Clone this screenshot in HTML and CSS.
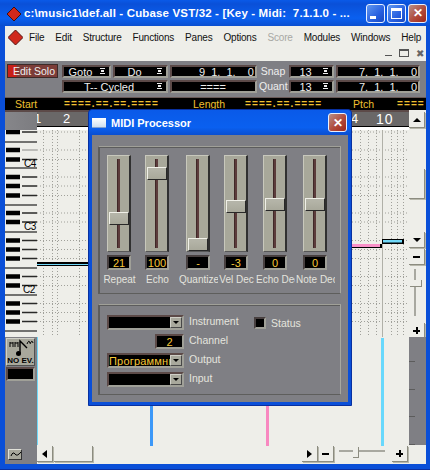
FILE: index.html
```html
<!DOCTYPE html>
<html lang="en">
<head>
	<meta charset="UTF-8">
	<title>Cubase VST/32 - MIDI Processor</title>
	<link rel="stylesheet" href="styles.css">
</head>
<body>
<div class="window">
	<div class="titlebar">
		<svg class="app-icon" width="14" height="14" viewBox="0 0 14 14"><path d="M7 0L14 7L7 14L0 7Z" fill="#d0281c" stroke="#401010"/></svg>
		<span class="title-text">c:\music1\def.all - Cubase VST/32 - [Key - Midi:&nbsp; 7.1.1.0 - ...</span>
		<div class="win-btns">
			<span class="win-btn"><i class="ic-min"></i></span>
			<span class="win-btn"><i class="ic-max"></i></span>
			<span class="win-btn close">&#10005;</span>
		</div>
	</div>

	<div class="content">
		<div class="menubar">
			<svg class="menu-icon" width="15" height="15" viewBox="0 0 15 15"><path d="M7.5 0L15 7.5L7.5 15L0 7.5Z" fill="#d0281c" stroke="#501010"/></svg>
			<span>File</span><span>Edit</span><span>Structure</span><span>Functions</span><span>Panes</span><span>Options</span><span class="off">Score</span><span>Modules</span><span>Windows</span><span>Help</span>
		</div>
		<div class="mdi-row">
			<i class="mdi-min"></i><i class="mdi-max"></i><span class="mdi-close">&#10006;</span>
		</div>

		<div class="transport">
			<div class="edit-solo"><span>Edit Solo</span></div>
			<div class="lcd drop">Goto<i class="spin"></i></div>
			<div class="lcd drop">Do<i class="spin"></i></div>
			<div class="lcd time">9 &nbsp;1. &nbsp;1. &nbsp; &nbsp;0</div>
			<div class="tlabel">Snap</div>
			<div class="lcd drop">13<i class="spin"></i></div>
			<div class="lcd time">7. &nbsp;1. &nbsp;1. &nbsp; &nbsp;0</div>

			<div class="lcd drop wide">T-- Cycled<i class="spin"></i></div>
			<div class="lcd time center">====</div>
			<div class="tlabel">Quant</div>
			<div class="lcd drop">13<i class="spin"></i></div>
			<div class="lcd time">7. &nbsp;1. &nbsp;1. &nbsp; &nbsp;0</div>
		</div>

		<div class="infobar">
			<span class="i-start">Start</span><span class="i-val v1">====.==.==.====</span>
			<span class="i-len">Length</span><span class="i-val v2">====.==.====</span>
			<span class="i-pitch">Ptch</span><span class="i-val v3">====</span>
		</div>

		<div class="editor">
			<div class="corner"></div>
			<div class="ruler">
				<span class="r1">1</span><span class="r2">2</span><span class="r4">4</span><span class="r10">10</span>
			</div>
			<div class="vbar">
				<div class="btn up"><i class="tri-up"></i></div>
				<div class="vthumb"></div>
				<div class="btn down"><i class="tri-down"></i></div>
				<div class="btn"><i class="minus"></i></div>
				<div class="vslide"><div class="vslide-thumb"></div></div>
				<div class="btn plus-btn"><i class="plus"></i></div>
			</div>

			<svg class="keys" width="32" height="207" viewBox="0 0 32 207">
				<rect width="32" height="207" fill="#eeeee9"/>
				<path d="M0 12H32M0 38H32M0 75H32M0 102H32M0 138H32M0 165H32M0 201H32" stroke="#4a4a48" stroke-width="1.5"/>
				<path d="M1 2H15M1 20H15M1 29.5H15M1 47H15M1 56H15M1 65.5H15M1 83H15M1 92H15M1 110.5H15M1 119.5H15M1 128.5H15M1 146.5H15M1 155.5H15M1 173.5H15M1 182.5H15M1 191.5H15" stroke="#000" stroke-width="4.4"/>
				<path d="M17 2H32M17 29.5H32M17 47H32M17 56H32M17 65.5H32M17 83H32M17 92H32M17 110.5H32M17 119.5H32M17 128.5H32M17 146.5H32M17 155.5H32M17 173.5H32M17 182.5H32M17 191.5H32" stroke="#2a2a28" stroke-width="1.5"/>
				<path d="M17 20H32" stroke="#8a8a88"/>
				<text x="19" y="37" class="key-label">C4</text>
				<text x="19" y="100" class="key-label">C3</text>
				<text x="18" y="163" class="key-label">C2</text>
			</svg>

			<svg class="grid" width="372" height="207" viewBox="0 0 372 207">
				<rect width="372" height="207" fill="#eeeee9"/>
				<path d="M0 2H370M0 20H370M0 29.5H370M0 47H370M0 56H370M0 65.5H370M0 83H370M0 92H370M0 110.5H370M0 119.5H370M0 128.5H370M0 146.5H370M0 155.5H370M0 173.5H370M0 182.5H370M0 191.5H370" stroke="#a0a09a" stroke-dasharray="1 2" fill="none"/>
				<path d="M6.5 0V207M15.5 0V207M20.5 0V207M42.5 0V207M323.5 0V207M331.5 0V207M339.5 0V207M354.5 0V207M360.5 0V207M366.5 0V207" stroke="#a0a09a" stroke-dasharray="1 2" fill="none"/>
				<path d="M345.5 0V207" stroke="#b0b0a8"/>
				<rect x="0" y="132" width="60" height="4" fill="#000"/>
				<rect x="0" y="134" width="60" height="1" fill="#70d8f8"/>
				<rect x="310" y="114" width="35" height="4" fill="#000"/>
				<rect x="310" y="114" width="33" height="3" fill="#f890c8"/>
				<rect x="345" y="109" width="22" height="5" fill="#000"/>
				<rect x="346" y="110" width="19" height="2.5" fill="#70d8f8"/>
			</svg>

			<div class="tools">
				<div class="noev">
					<svg width="26" height="18" viewBox="0 0 26 18">
						<path d="M2 3V8M5 3V8M2 4H5M7 3V8M10 3V8M7 4H10M19 5Q21 0 22 4M22 5Q24 0 25 4" stroke="#000" fill="none"/>
						<path d="M12 14V2L19 9" stroke="#000" stroke-width="1.4" fill="none"/>
						<ellipse cx="10.5" cy="14.5" rx="2.5" ry="2.5" fill="#000"/>
					</svg>
					<span>NO EV.</span>
				</div>
				<div class="lcd tool-lcd"></div>
				<div class="wave">
					<svg width="12" height="9" viewBox="0 0 12 9"><path d="M1 6Q3 1 5 4T11 2" stroke="#000" fill="none"/></svg>
				</div>
			</div>

			<div class="lane">
				<i class="ctl blue"></i><i class="ctl pink"></i><i class="ctl cyan"></i>
			</div>
			<div class="velo"></div>

			<div class="hbar">
				<div class="btn"><i class="tri-left"></i></div>
				<div class="hthumb"></div>
				<div class="spacer"></div>
				<div class="btn"><i class="tri-right"></i></div>
				<div class="btn"><i class="minus"></i></div>
				<div class="hslide"><div class="hslide-thumb"></div></div>
				<div class="btn"><i class="plus"></i></div>
			</div>
		</div>
	</div>

	<!-- dialog over the editor -->
	<div class="dialog">
		<div class="dlg-title">
			<i class="dlg-icon"></i>
			<span>MIDI Processor</span>
			<span class="win-btn close dlg-close">&#10005;</span>
		</div>
		<div class="dlg-body">
			<div class="panel faders">
				<div class="channel">
					<div class="fader"><div class="slot"></div><div class="thumb" style="top:56px"></div></div>
					<div class="lcd val">21</div>
					<div class="flabel">Repeat</div>
				</div>
				<div class="channel">
					<div class="fader"><div class="slot"></div><div class="thumb" style="top:11px"></div></div>
					<div class="lcd val">100</div>
					<div class="flabel">Echo</div>
				</div>
				<div class="channel">
					<div class="fader"><div class="slot"></div><div class="thumb" style="top:82px"></div></div>
					<div class="lcd val">-</div>
					<div class="flabel">Quantize</div>
				</div>
				<div class="channel">
					<div class="fader"><div class="slot"></div><div class="thumb" style="top:44px"></div></div>
					<div class="lcd val">-3</div>
					<div class="flabel">Vel Dec</div>
				</div>
				<div class="channel">
					<div class="fader"><div class="slot"></div><div class="thumb" style="top:42px"></div></div>
					<div class="lcd val">0</div>
					<div class="flabel">Echo Dec</div>
				</div>
				<div class="channel">
					<div class="fader"><div class="slot"></div><div class="thumb" style="top:42px"></div></div>
					<div class="lcd val">0</div>
					<div class="flabel">Note Dec</div>
				</div>
			</div>
			<div class="panel routing">
				<div class="lcd select"><i class="sel-btn"><b class="tri-down small"></b></i></div>
				<div class="rlabel">Instrument</div>
				<div class="status"><i class="check"></i><span>Status</span></div>

				<div class="lcd channel-box">2</div>
				<div class="rlabel">Channel</div>
				<div></div>

				<div class="lcd select">Программный<i class="sel-btn"><b class="tri-down small"></b></i></div>
				<div class="rlabel">Output</div>
				<div></div>

				<div class="lcd select"><i class="sel-btn"><b class="tri-down small"></b></i></div>
				<div class="rlabel">Input</div>
				<div></div>
			</div>
		</div>
	</div>
</div>
</body>
</html>
```

FILE: styles.css
```css
*{
	box-sizing: border-box;
}
body{
	margin: 0;
	font-family: "Liberation Sans", "Noto Sans", sans-serif;
	font-size: 11px;
}
i{
	display: block;
}

/* main window */
.window{
	position: relative;
	width: 430px;
	height: 470px;
	overflow: hidden;
	background: #0a4fd8;
	border-bottom: 1px solid #0a2fa0;
}
.titlebar{
	height: 26px;
	display: flex;
	align-items: center;
	padding: 0 3px 0 7px;
	background: linear-gradient(#0a5ae8, #0a50d8 15%, #0a60f0 70%, #0a4ed0);
}
.app-icon{
	flex: none;
	margin-top: 1px;
}
.title-text{
	flex: none;
	width: 340px;
	margin-left: 3px;
	overflow: hidden;
	color: #fff;
	font-size: 11.5px;
	font-weight: bold;
	letter-spacing: .15px;
	white-space: nowrap;
}
.win-btns{
	display: flex;
	gap: 2px;
	margin-left: auto;
}
.win-btn{
	flex: none;
	width: 19px;
	height: 19px;
	display: flex;
	align-items: center;
	justify-content: center;
	border: 1px solid #e8f0ff;
	border-radius: 3px;
	background: linear-gradient(135deg, #6098f0, #2860e0 60%, #1848c0);
	color: #fff;
}
.win-btn.close{
	font-size: 12px;
	font-weight: bold;
	background: linear-gradient(135deg, #b89088, #b04a3c 55%, #a02818);
}
.ic-min{
	width: 6px;
	height: 3px;
	background: #fff;
	margin: 8px 6px 0 0;
}
.ic-max{
	width: 11px;
	height: 11px;
	border: 1px solid #fff;
	border-top-width: 3px;
}

.content{
	width: 421px;
	height: 438px;
	margin-left: 5px;
	background: #eeeee9;
}
.menubar{
	height: 23px;
	display: flex;
	align-items: center;
	gap: 11px;
	padding-left: 3px;
	color: #111;
	font-size: 10px;
	letter-spacing: -.2px;
	white-space: nowrap;
}
.menu-icon{
	flex: none;
	margin-right: -5px;
}
.menubar .off{
	color: #a8a8a4;
}
.mdi-row{
	height: 12px;
	display: flex;
	align-items: flex-start;
	justify-content: flex-end;
	gap: 7px;
	padding-right: 2px;
}
.mdi-min{
	width: 7px;
	height: 1px;
	background: #555;
	margin-top: 6px;
}
.mdi-max{
	width: 10px;
	height: 8px;
	border: 1px solid #555;
	border-top-width: 2px;
}
.mdi-close{
	color: #666;
	font-size: 10px;
	line-height: 9px;
}

/* transport */
.transport{
	height: 36px;
	display: grid;
	grid-template-columns: 53px 49px 55px 87px 28px 45px 84px;
	grid-template-rows: 13px 13px;
	column-gap: 2px;
	row-gap: 2px;
	padding: 4px 0 0 2px;
	background: #7f7f84;
}
.lcd{
	background: #000;
	border: 2px solid;
	border-color: #5c4a48 #a0a098 #a0a098 #5c4a48;
	color: #eee;
	font-size: 11px;
	white-space: nowrap;
}
.edit-solo{
	width: 51px;
	height: 14px;
	margin-top: -1px;
	background: linear-gradient(90deg, #c82018 8px, #7c3c38 9px);
	border: 1px solid #3c2a28;
	color: #eee;
	font-size: 10.5px;
	line-height: 12px;
	text-align: right;
	padding-right: 2px;
	white-space: nowrap;
}
.drop{
	position: relative;
	text-align: center;
	line-height: 10px;
	padding-right: 12px;
}
.drop.wide{
	grid-column: 2 / span 2;
}
.spin{
	position: absolute;
	right: 4px;
	top: 1px;
	width: 5px;
	height: 6px;
	border-top: 1px solid #eee;
	border-bottom: 1px solid #eee;
	background: linear-gradient(#eee, #eee) center / 3px 2px no-repeat;
}
.time{
	text-align: right;
	line-height: 10px;
	padding-right: 1px;
}
.time.center{
	text-align: center;
}
.tlabel{
	color: #eee;
	font-size: 10.5px;
	line-height: 13px;
	text-align: center;
	white-space: nowrap;
}
.infobar{
	height: 13px;
	position: relative;
	background: #000;
	color: #f0c030;
	font-size: 10.5px;
	line-height: 12px;
	border-top: 1px solid #6a5a58;
	white-space: nowrap;
}
.infobar span{
	position: absolute;
	top: 0;
}
.i-start{ left: 10px; }
.v1{ left: 59px; }
.i-len{ left: 188px; }
.v2{ left: 240px; }
.i-pitch{ left: 348px; }
.v3{ left: 392px; }
.i-val{
	letter-spacing: 1.1px;
	font-weight: bold;
	font-size: 10px;
}

/* editor area */
.editor{
	display: grid;
	grid-template-columns: 32px 372px 17px;
	grid-template-rows: 20px 207px 108px 19px;
}
.corner{
	grid-column: 1;
	grid-row: 1;
	background: linear-gradient(90deg, #86868a, #7c7c80);
	border-top: 2px solid #5c4a48;
}
.ruler{
	grid-column: 2;
	grid-row: 1;
	position: relative;
	overflow: hidden;
	background: #6a6868;
	border-top: 2px solid #5c4a48;
	border-bottom: 3px solid #fff;
	box-shadow: inset 0 -1px 0 #000;
	color: #fff;
	font-size: 13px;
}
.ruler span{
	position: absolute;
	top: -1px;
}
.r1{ left: -3px; }
.r2{ left: 26px; }
.r4{ left: 314px; }
.r10{ left: 339px; font-size: 14px; letter-spacing: 1px; }
.vbar{
	grid-column: 3;
	grid-row: 1 / span 2;
	display: flex;
	flex-direction: column;
	align-items: flex-start;
	padding-top: 2px;
}
.btn{
	flex: none;
	width: 16px;
	height: 16px;
	display: flex;
	align-items: center;
	justify-content: center;
	border-right: 1px solid #8c8c80;
	border-bottom: 1px solid #8c8c80;
	box-shadow: 1px 1px 0 #b8b8ac;
}
.vthumb{
	flex: none;
	width: 16px;
	height: 30px;
	margin: 41px 0 33px;
	border-right: 1px solid #8c8c80;
	border-bottom: 1px solid #8c8c80;
	box-shadow: 1px 1px 0 #b8b8ac;
}
.tri-up{
	border: 4px solid transparent;
	border-top: 0;
	border-bottom: 4px solid #000;
}
.tri-down{
	border: 4px solid transparent;
	border-bottom: 0;
	border-top: 4px solid #000;
}
.tri-left{
	border: 4px solid transparent;
	border-left: 0;
	border-right: 5px solid #000;
}
.tri-right{
	border: 4px solid transparent;
	border-right: 0;
	border-left: 5px solid #000;
}
.minus{
	width: 7px;
	height: 2px;
	background: #000;
}
.plus{
	width: 7px;
	height: 7px;
	background: linear-gradient(#000, #000) center / 7px 2px no-repeat, linear-gradient(#000, #000) center / 2px 7px no-repeat;
}
.down{
	margin-bottom: 1px;
}
.vslide{
	position: relative;
	flex: none;
	width: 16px;
	height: 57px;
	margin-bottom: 1px;
}
.vslide::before{
	content: "";
	position: absolute;
	left: 5px;
	top: 4px;
	bottom: 6px;
	width: 2px;
	background: #a8a8a0;
}
.vslide-thumb{
	position: absolute;
	left: 1px;
	top: 15px;
	width: 12px;
	height: 7px;
	background: #eeeee9;
	border-right: 1px solid #8c8c80;
	border-bottom: 1px solid #8c8c80;
}
.keys, .grid{
	display: block;
	grid-row: 2;
}
.keys{
	grid-column: 1;
}
.grid{
	grid-column: 2;
}
.key-label{
	font-family: "Liberation Sans", sans-serif;
	font-size: 10px;
	letter-spacing: -.5px;
	fill: #000;
}
.tools{
	grid-column: 1;
	grid-row: 3 / span 2;
	display: flex;
	flex-direction: column;
	padding-left: 1px;
	background: #7f7f84;
}
.noev{
	width: 29px;
	height: 28px;
	margin-top: 1px;
	display: flex;
	flex-direction: column;
	align-items: center;
	background: #a8a89c;
	border: 1px solid #d0d0c8;
	border-right-color: #505050;
	border-bottom-color: #505050;
	color: #000;
	font-size: 8px;
	font-weight: bold;
	line-height: 8px;
	white-space: nowrap;
}
.tool-lcd{
	width: 29px;
	height: 14px;
	margin-top: 1px;
}
.wave{
	width: 14px;
	height: 11px;
	margin: 68px 0 0 2px;
	padding-left: 1px;
	background: #a8a89c;
	border: 1px solid #e0e0d8;
	border-right-color: #333;
	border-bottom-color: #333;
}
.wave svg{
	display: block;
}
.lane{
	grid-column: 2;
	grid-row: 3;
	position: relative;
	background: #eeeee9;
	border-left: 1px solid #70d8f8;
}
.ctl{
	position: absolute;
	top: 1px;
	bottom: -1px;
	width: 3px;
}
.blue{ left: 112px; background: #3c98f8; }
.pink{ left: 228px; background: #f888c0; }
.cyan{ left: 343px; background: #68d8fc; }
.velo{
	grid-column: 3;
	grid-row: 3;
	background: #7f7f84;
	background-image: linear-gradient(#5c5c5c, #5c5c5c), linear-gradient(#5c5c5c, #5c5c5c), linear-gradient(#5c5c5c, #5c5c5c), linear-gradient(#5c5c5c, #5c5c5c);
	background-size: 6px 1px;
	background-repeat: no-repeat;
	background-position: 0 24px, 0 52px, 0 79px, 0 107px;
}
.hbar{
	grid-column: 2 / span 2;
	grid-row: 4;
	display: flex;
	padding-top: 1px;
}
.hthumb{
	flex: none;
	width: 39px;
	height: 16px;
	margin-left: 1px;
	border-right: 1px solid #8c8c80;
	border-bottom: 1px solid #8c8c80;
	box-shadow: 1px 1px 0 #b8b8ac;
}
.spacer{
	flex: none;
	width: 209px;
}
.hslide{
	position: relative;
	flex: none;
	width: 46px;
	margin: 0 7px 0 5px;
}
.hslide::before{
	content: "";
	position: absolute;
	left: 0;
	right: 0;
	top: 4px;
	height: 2px;
	background: #a8a8a0;
}
.hslide-thumb{
	position: absolute;
	left: 14px;
	top: 1px;
	width: 6px;
	height: 11px;
	background: #eeeee9;
	border-right: 1px solid #8c8c80;
	border-bottom: 1px solid #8c8c80;
}

/* MIDI Processor dialog */
.dialog{
	position: absolute;
	left: 88px;
	top: 109px;
	width: 264px;
	height: 297px;
	background: #0a4fd8;
	border: 1px solid #0830a0;
	border-radius: 4px 4px 0 0;
	padding: 0 3px 3px;
}
.dlg-title{
	height: 25px;
	display: flex;
	align-items: center;
	color: #fff;
	font-size: 11px;
	font-weight: bold;
	background: linear-gradient(#0a5ae8, #0a60f0 70%, #0a4ed0);
	margin: 0 -3px;
	padding: 0 4px 0 3px;
	border-radius: 4px 4px 0 0;
}
.dlg-icon{
	flex: none;
	width: 14px;
	height: 10px;
	margin-right: 5px;
	background: linear-gradient(#fff, #cfe0f0);
	border-bottom: 1px solid #80a0d0;
}
.dlg-close{
	margin-left: auto;
}
.dlg-body{
	height: 267px;
	background: #7f7f84;
	padding: 11px 7px 0 6px;
}
.panel{
	border: 1px solid;
	border-color: #a0a098 #a8a8a0 #5e5e5c #5e5e5c;
	box-shadow: inset 1px 1px 0 #5c5c5c;
}
.faders{
	height: 148px;
	display: grid;
	grid-template-columns: 38px 41px 38px 39px 40px 38px;
	padding: 8px 0 0 8px;
}
.channel{
	min-width: 0;
}
.fader{
	position: relative;
	width: 24px;
	height: 97px;
	background: #a8a89a;
	border-top: 1px solid #c8c8bc;
	border-left: 1px solid #c8c8bc;
	border-right: 2px solid #303030;
	border-bottom: 1px solid #585858;
}
.slot{
	position: absolute;
	left: 9px;
	top: 3px;
	bottom: 3px;
	width: 3px;
	background: #5c3c3c;
	border-left: 1px solid #402828;
}
.thumb{
	position: absolute;
	left: 1px;
	width: 20px;
	height: 13px;
	background: linear-gradient(#b4b4a8 2px, #a8a89a);
	border: 1px solid #f0f0e8;
	border-right-color: #282828;
	border-bottom-color: #282828;
}
.val{
	width: 24px;
	height: 15px;
	margin-top: 3px;
	color: #f8c838;
	text-align: center;
	font-size: 11px;
	line-height: 12px;
	border-color: #484040 #a0a098 #a0a098 #484040;
}
.flabel{
	width: 39px;
	margin-top: 4px;
	margin-left: -7px;
	overflow: hidden;
	color: #e4e4de;
	font-size: 10px;
	text-align: center;
	white-space: nowrap;
}
.routing{
	height: 91px;
	margin-top: 10px;
	display: grid;
	grid-template-columns: 77px 70px auto;
	grid-template-rows: 15px 15px 15px 15px;
	row-gap: 4px;
	padding: 10px 0 0 8px;
	color: #e4e4de;
}
.select{
	position: relative;
	width: 77px;
	color: #f8c838;
	line-height: 12px;
	font-size: 11px;
	overflow: hidden;
	letter-spacing: .2px;
}
.sel-btn{
	position: absolute;
	right: 0;
	top: 0;
	width: 12px;
	height: 11px;
	display: flex;
	align-items: center;
	justify-content: center;
	background: #a8a89c;
	border: 1px solid #d0d0c8;
	border-right-color: #484848;
	border-bottom-color: #484848;
}
.small{
	display: block;
	border-width: 3px;
	border-bottom: 0;
}
.channel-box{
	width: 29px;
	margin-left: 48px;
	color: #f8c838;
	text-align: center;
	line-height: 12px;
}
.rlabel{
	padding-left: 5px;
	font-size: 10.5px;
	line-height: 13px;
}
.status{
	display: flex;
	align-items: center;
	gap: 5px;
	font-size: 10.5px;
}
.check{
	flex: none;
	width: 12px;
	height: 12px;
	background: #000;
	border: 2px solid;
	border-color: #484040 #a0a098 #a0a098 #484040;
}
```
